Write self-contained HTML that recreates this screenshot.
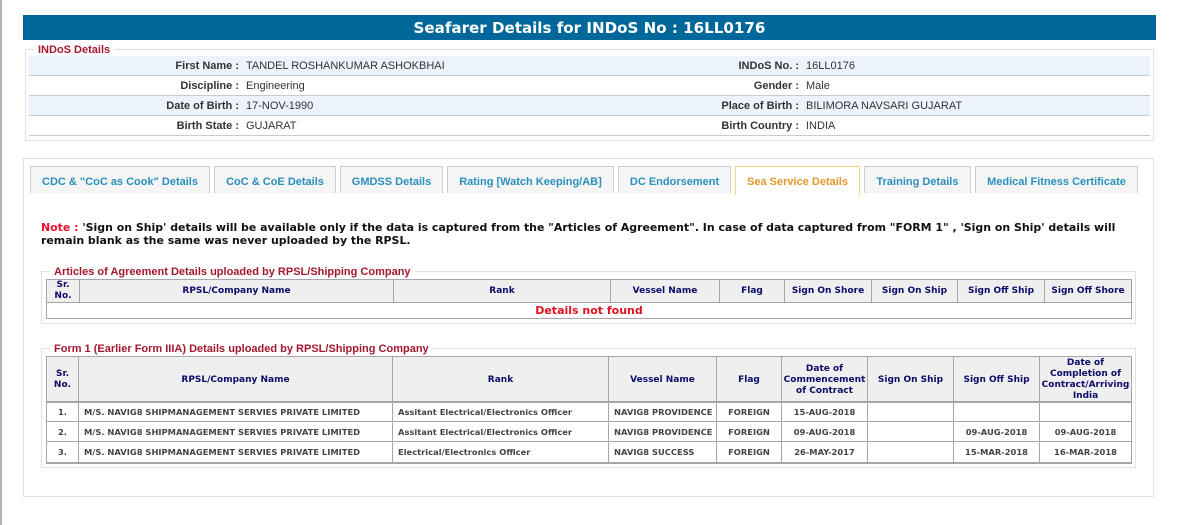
<!DOCTYPE html>
<html><head><meta charset="utf-8"><title>Seafarer Details</title>
<style>
html,body{margin:0;padding:0;background:#fff;width:1184px;height:525px;overflow:hidden}
body{position:relative;font-family:"Liberation Sans",sans-serif}
.a{position:absolute;white-space:nowrap}
#bar{left:0;top:0;width:2px;height:525px;background:#b4b4b4}
#hdr{left:23px;top:15px;width:1133px;height:25px;background:#00679a;color:#fff;text-align:center;font:bold 15.1px/27px "DejaVu Sans",sans-serif}
.box{position:absolute;border:1px solid #e2e2e2;box-sizing:border-box}
.leg{position:absolute;background:#fff;color:#a3182f;font-size:11px;font-weight:bold;line-height:12px;padding:0 4px;white-space:nowrap}
.row{position:absolute;left:29px;width:1121px;height:19px;border-bottom:1px solid #c8ccd0;font-size:11px;line-height:20px;color:#333}
.row.b{background:#edf3fb}
.l{position:absolute;right:0;text-align:right;font-weight:bold;color:#333;white-space:nowrap}
.l1{left:0;width:210px}.l2{left:0;width:770px}
.v{position:absolute;white-space:nowrap}.v1{left:217px}.v2{left:777px}
.tab{position:absolute;top:166px;height:27px;box-sizing:border-box;background:#f5f5f5;border:1px solid #ccc;border-bottom:0;color:#2b90bd;font-weight:bold;font-size:11px;line-height:30px;text-align:center;white-space:nowrap}
.tab.on{background:#fff;border-color:#f3d67c;color:#e5972a;height:29px;z-index:2}
#note{left:41px;top:221px;width:1090px;font:bold 10.95px/13px "DejaVu Sans",sans-serif;color:#111;white-space:nowrap}
#note b{color:#e8112d}
table{position:absolute;left:46px;border-collapse:separate;border-spacing:0;table-layout:fixed;border:1px solid #a6a6a6;border-bottom:2px solid #a6a6a6;font-family:"DejaVu Sans",sans-serif;box-sizing:border-box}
td,th{padding:0;box-sizing:border-box;overflow:hidden}
th{background:#efefef;color:#0b0b68;font-size:9px;line-height:11px;font-weight:bold;text-align:center;border-left:1px solid #a6a6a6;border-bottom:1px solid #a6a6a6}
th span{position:relative;top:1px}
th:first-child,td:first-child{border-left:0}
td{border-left:1px solid #a6a6a6;border-bottom:1px solid #a6a6a6;font-size:8.35px;font-weight:bold;color:#444;text-align:center;white-space:nowrap;height:20px;border-top:1px solid #fff}
tr:nth-child(2) td{border-top-color:#a6a6a6}
tr:last-child td{border-bottom:0;padding-bottom:1px}
td.t{text-align:left;padding-left:5px}
#t1{border-bottom-width:1px}
#t1 td{color:#e2111f;font-size:11px;line-height:15px;height:15px;border-top:0;padding:0}
</style></head><body>
<div class="a" id="bar"></div>
<div class="a" id="hdr">Seafarer Details for INDoS No : 16LL0176</div>

<div class="box" style="left:25px;top:49px;width:1129px;height:92px"></div>
<div class="leg" style="left:34px;top:44px">INDoS Details</div>
<div class="row b" style="top:56px"><span class="l l1">First Name :</span><span class="v v1">TANDEL ROSHANKUMAR ASHOKBHAI</span><span class="l l2">INDoS No. :</span><span class="v v2">16LL0176</span></div>
<div class="row" style="top:76px"><span class="l l1">Discipline :</span><span class="v v1">Engineering</span><span class="l l2">Gender :</span><span class="v v2">Male</span></div>
<div class="row b" style="top:96px"><span class="l l1">Date of Birth :</span><span class="v v1">17-NOV-1990</span><span class="l l2">Place of Birth :</span><span class="v v2">BILIMORA NAVSARI GUJARAT</span></div>
<div class="row" style="top:116px"><span class="l l1">Birth State :</span><span class="v v1">GUJARAT</span><span class="l l2">Birth Country :</span><span class="v v2">INDIA</span></div>

<div class="box" style="left:23px;top:158px;width:1131px;height:339px"></div>
<div class="tab" style="left:30px;width:180px">CDC &amp; "CoC as Cook" Details</div>
<div class="tab" style="left:214px;width:122px">CoC &amp; CoE Details</div>
<div class="tab" style="left:340px;width:103px">GMDSS Details</div>
<div class="tab" style="left:447px;width:167px">Rating [Watch Keeping/AB]</div>
<div class="tab" style="left:618px;width:113px">DC Endorsement</div>
<div class="tab on" style="left:735px;width:125px">Sea Service Details</div>
<div class="tab" style="left:864px;width:107px">Training Details</div>
<div class="tab" style="left:975px;width:163px">Medical Fitness Certificate</div>

<div class="a" id="note"><b>Note : </b>'Sign on Ship' details will be available only if the data is captured from the "Articles of Agreement". In case of data captured from "FORM 1" , 'Sign on Ship' details will<br>remain blank as the same was never uploaded by the RPSL.</div>

<div class="box" style="left:41px;top:271px;width:1095px;height:53px"></div>
<div class="leg" style="left:50px;top:266px">Articles of Agreement Details uploaded by RPSL/Shipping Company</div>
<table id="t1" style="top:279px;width:1086px;height:40px">
<colgroup><col style="width:32px"><col style="width:314px"><col style="width:217px"><col style="width:109px"><col style="width:65px"><col style="width:87px"><col style="width:86px"><col style="width:87px"><col style="width:87px"></colgroup>
<tr style="height:23px"><th>Sr.<br>No.</th><th>RPSL/Company Name</th><th>Rank</th><th>Vessel Name</th><th>Flag</th><th>Sign On Shore</th><th>Sign On Ship</th><th>Sign Off Ship</th><th>Sign Off Shore</th></tr>
<tr><td colspan="9">Details not found</td></tr>
</table>

<div class="box" style="left:41px;top:348px;width:1095px;height:120px"></div>
<div class="leg" style="left:50px;top:343px">Form 1 (Earlier Form IIIA) Details uploaded by RPSL/Shipping Company</div>
<table style="top:356px;width:1086px;height:108px">
<colgroup><col style="width:31px"><col style="width:314px"><col style="width:216px"><col style="width:108px"><col style="width:65px"><col style="width:86px"><col style="width:86px"><col style="width:86px"><col style="width:92px"></colgroup>
<tr style="height:45px"><th><span>Sr.<br>No.</span></th><th><span>RPSL/Company Name</span></th><th><span>Rank</span></th><th><span>Vessel Name</span></th><th><span>Flag</span></th><th><span>Date of Commencement of Contract</span></th><th><span>Sign On Ship</span></th><th><span>Sign Off Ship</span></th><th><span>Date of Completion of Contract/Arriving India</span></th></tr>
<tr><td>1.</td><td class="t">M/S. NAVIG8 SHIPMANAGEMENT SERVIES PRIVATE LIMITED</td><td class="t">Assitant Electrical/Electronics Officer</td><td class="t">NAVIG8 PROVIDENCE</td><td>FOREIGN</td><td>15-AUG-2018</td><td></td><td></td><td></td></tr>
<tr><td>2.</td><td class="t">M/S. NAVIG8 SHIPMANAGEMENT SERVIES PRIVATE LIMITED</td><td class="t">Assitant Electrical/Electronics Officer</td><td class="t">NAVIG8 PROVIDENCE</td><td>FOREIGN</td><td>09-AUG-2018</td><td></td><td>09-AUG-2018</td><td>09-AUG-2018</td></tr>
<tr><td>3.</td><td class="t">M/S. NAVIG8 SHIPMANAGEMENT SERVIES PRIVATE LIMITED</td><td class="t">Electrical/Electronics Officer</td><td class="t">NAVIG8 SUCCESS</td><td>FOREIGN</td><td>26-MAY-2017</td><td></td><td>15-MAR-2018</td><td>16-MAR-2018</td></tr>
</table>
</body></html>
